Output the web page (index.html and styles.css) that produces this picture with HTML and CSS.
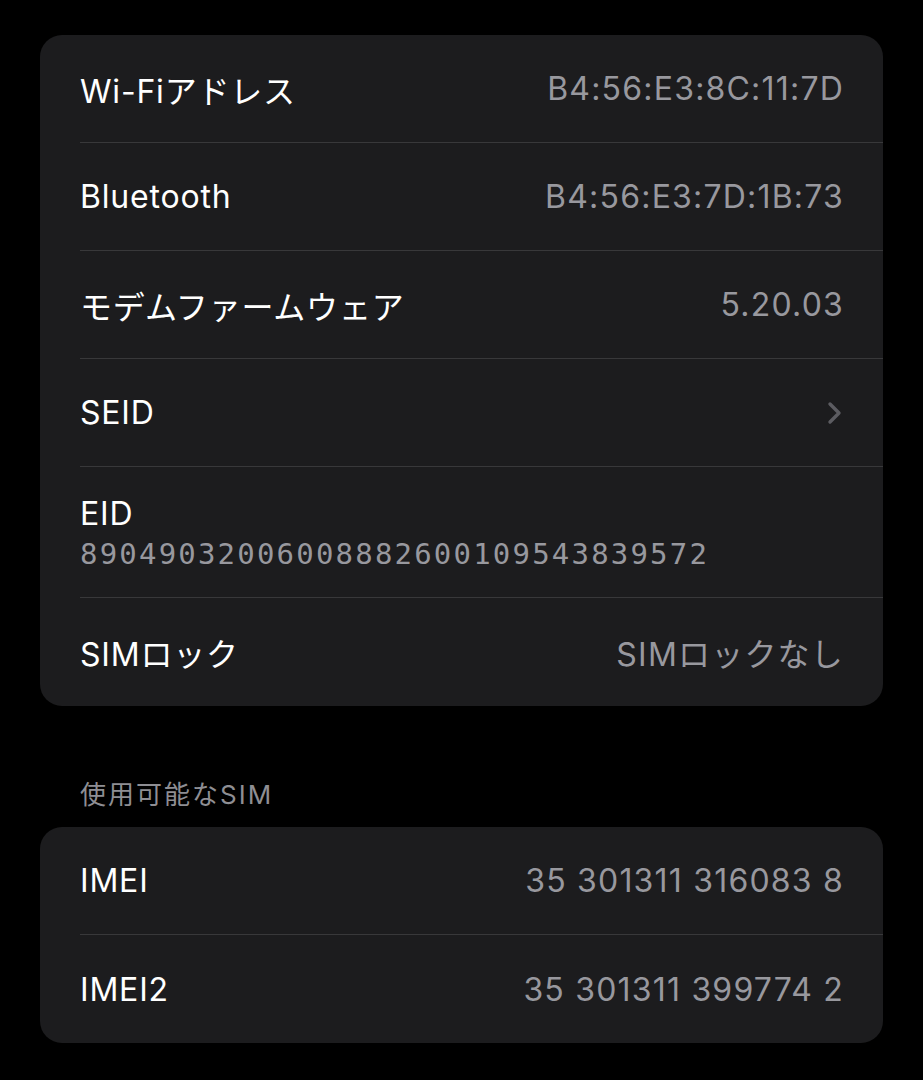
FILE: index.html
```html
<!DOCTYPE html>
<html>
<head>
  <title>情報</title>
  <link rel="stylesheet" href="styles.css">
</head>
<body>
<div class="page">
  <div class="card">
    <div class="row">
      <span class="label">Wi-Fiアドレス</span>
      <span class="value">B4:56:E3:8C:11:7D</span>
    </div>
    <div class="row">
      <span class="label">Bluetooth</span>
      <span class="value">B4:56:E3:7D:1B:73</span>
    </div>
    <div class="row">
      <span class="label">モデムファームウェア</span>
      <span class="value">5.20.03</span>
    </div>
    <div class="row">
      <span class="label">SEID</span>
      <svg class="chevron" width="16" height="24" viewBox="0 0 16 24">
        <path d="M3 3 L12 12 L3 21" fill="none" stroke="#5c5c61" stroke-width="3.4" stroke-linecap="round" stroke-linejoin="round"/>
      </svg>
    </div>
    <div class="row tall">
      <span class="label">EID</span>
      <span class="mono">89049032006008882600109543839572</span>
    </div>
    <div class="row">
      <span class="label">SIMロック</span>
      <span class="value">SIMロックなし</span>
    </div>
  </div>

  <div class="section-title">使用可能なSIM</div>
  <div class="card">
    <div class="row">
      <span class="label">IMEI</span>
      <span class="value">35 301311 316083 8</span>
    </div>
    <div class="row">
      <span class="label">IMEI2</span>
      <span class="value">35 301311 399774 2</span>
    </div>
  </div>
</div>
</body>
</html>
```

FILE: styles.css
```css
body {
  margin: 0;
  padding: 0;
  background: #000;
  color: #fff;
  font-family: "Inter", "Noto Sans CJK JP", sans-serif;
}
.page {
  padding: 35px 40px 0 40px;
}
.card {
  background: #1c1c1e;
  border-radius: 22px;
  overflow: hidden;
}
.row {
  height: 108px;
  margin-left: 40px;
  padding-right: 40px;
  display: flex;
  align-items: center;
  justify-content: space-between;
  border-bottom: 1px solid #38383a;
  box-sizing: border-box;
}
.row:last-child {
  border-bottom: none;
}
.row.tall {
  height: 131px;
  flex-direction: column;
  align-items: flex-start;
  justify-content: center;
}
.label {
  font-size: 32px;
  letter-spacing: 0.8px;
}
.value {
  font-size: 32px;
  color: #98989e;
  letter-spacing: 1.2px;
  margin-right: -1px;
}
.mono {
  font-family: "DejaVu Sans Mono", monospace;
  font-size: 29px;
  letter-spacing: 2.2px;
  color: #98989e;
  margin-top: 4px;
}
.section-title {
  font-size: 26px;
  line-height: 30px;
  letter-spacing: 2px;
  color: #8e8e93;
  margin: 74px 0 17px 40px;
}
```
